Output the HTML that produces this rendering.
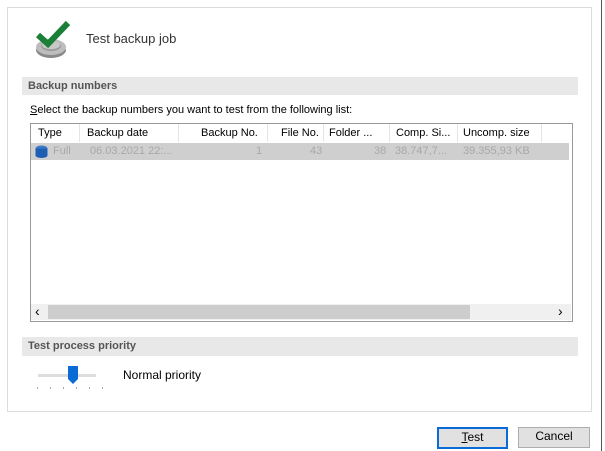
<!DOCTYPE html><html><head><style>
body{margin:0;width:605px;height:451px;background:#fff;position:relative;overflow:hidden;font-family:"Liberation Sans",sans-serif;font-size:11px;color:#000}
.a{position:absolute}
.panel{left:7px;top:7px;width:583px;height:403px;border:1px solid #dcdcdc}
.bar{background:#e8e8e8;color:#555;font-weight:bold;font-size:11px;padding-left:6px;line-height:19px}
.hd span,.row span{position:absolute;top:0;white-space:nowrap}
.hd span{line-height:18px}
.sep{position:absolute;top:0;width:1px;height:18px;background:#e5e5e5}
.row span{color:#a8a8a8;line-height:17px}
.btn{background:#e1e1e1;border:1px solid #adadad;text-align:center;line-height:17px;font-size:12px}
</style></head><body>
<div class="a" style="left:601px;top:0;width:1px;height:451px;background:#555"></div>
<div class="a panel"></div>
<svg class="a" style="left:33px;top:18px" width="44" height="44" viewBox="0 0 44 44">
<ellipse cx="18" cy="32" rx="15" ry="8" fill="#8a8a8a"/>
<ellipse cx="18" cy="29" rx="15" ry="8" fill="#bdbdbd"/>
<ellipse cx="18" cy="28" rx="10" ry="5" fill="#9a9a9a"/>
<ellipse cx="18" cy="27" rx="9" ry="4.2" fill="#c8c8c8"/>
<path d="M5 17 L15 26 L35 5" stroke="#1a7f37" stroke-width="6" fill="none"/>
</svg>
<div class="a" style="left:86px;top:31px;font-size:13px;color:#333">Test backup job</div>
<div class="a bar" style="left:22px;top:77px;width:550px;height:18px">Backup numbers</div>
<div class="a" style="left:30px;top:104px"><u>S</u>elect the backup numbers you want to test from the following list:</div>
<div class="a" style="left:30px;top:123px;width:541px;height:197px;border:1px solid #999"></div>
<div class="a hd" style="left:31px;top:124px;width:541px;height:18px">
<span style="left:7px">Type</span><div class="sep" style="left:48px"></div>
<span style="left:56px">Backup date</span><div class="sep" style="left:147px"></div>
<span style="left:170px">Backup No.</span><div class="sep" style="left:236px"></div>
<span style="left:250px">File No.</span><div class="sep" style="left:292px"></div>
<span style="left:298px">Folder ...</span><div class="sep" style="left:358px"></div>
<span style="left:365px">Comp. Si...</span><div class="sep" style="left:426px"></div>
<span style="left:432px">Uncomp. size</span><div class="sep" style="left:510px"></div>
</div>
<div class="a row" style="left:31px;top:143px;width:538px;height:17px;background:#cfcfcf">
<svg style="position:absolute;left:4px;top:2px" width="13" height="13"><ellipse cx="6.5" cy="3.5" rx="6" ry="3" fill="#3a78c8"/><rect x="0.5" y="3.5" width="12" height="7" fill="#1e5fb3"/><ellipse cx="6.5" cy="10.5" rx="6" ry="2.5" fill="#1e5fb3"/></svg>
<span style="left:22px">Full</span><span style="left:59px">06.03.2021 22:...</span>
<span style="left:225px">1</span><span style="left:279px">43</span><span style="left:343px">38</span>
<span style="left:364px">38.747,7...</span><span style="left:432px">39.355,93 KB</span>
</div>
<div class="a" style="left:31px;top:304px;width:540px;height:16px;background:#f0f0f0"></div>
<div class="a" style="left:48px;top:305px;width:422px;height:14px;background:#cdcdcd"></div>
<div class="a" style="left:35px;top:303px;font-size:14px;line-height:16px">&#8249;</div>
<div class="a" style="left:558px;top:303px;font-size:14px;line-height:16px">&#8250;</div>
<div class="a bar" style="left:22px;top:337px;width:550px;height:19px">Test process priority</div>
<div class="a" style="left:38px;top:374px;width:58px;height:3px;background:#ddd"></div>
<svg class="a" style="left:67px;top:366px" width="12" height="19"><path d="M1 0H11V13L6 18L1 13Z" fill="#0a6ad6"/></svg>
<div class="a" style="left:37px;top:387px;width:70px;height:2px;background:repeating-linear-gradient(90deg,#aaa 0 1px,transparent 1px 13px)"></div>
<div class="a" style="left:123px;top:368px;font-size:12px">Normal priority</div>
<div class="a btn" style="left:437px;top:427px;width:67px;height:18px;border:2px solid #0a6ad6"><u>T</u>est</div>
<div class="a btn" style="left:518px;top:427px;width:70px;height:19px">Cancel</div>
</body></html>
